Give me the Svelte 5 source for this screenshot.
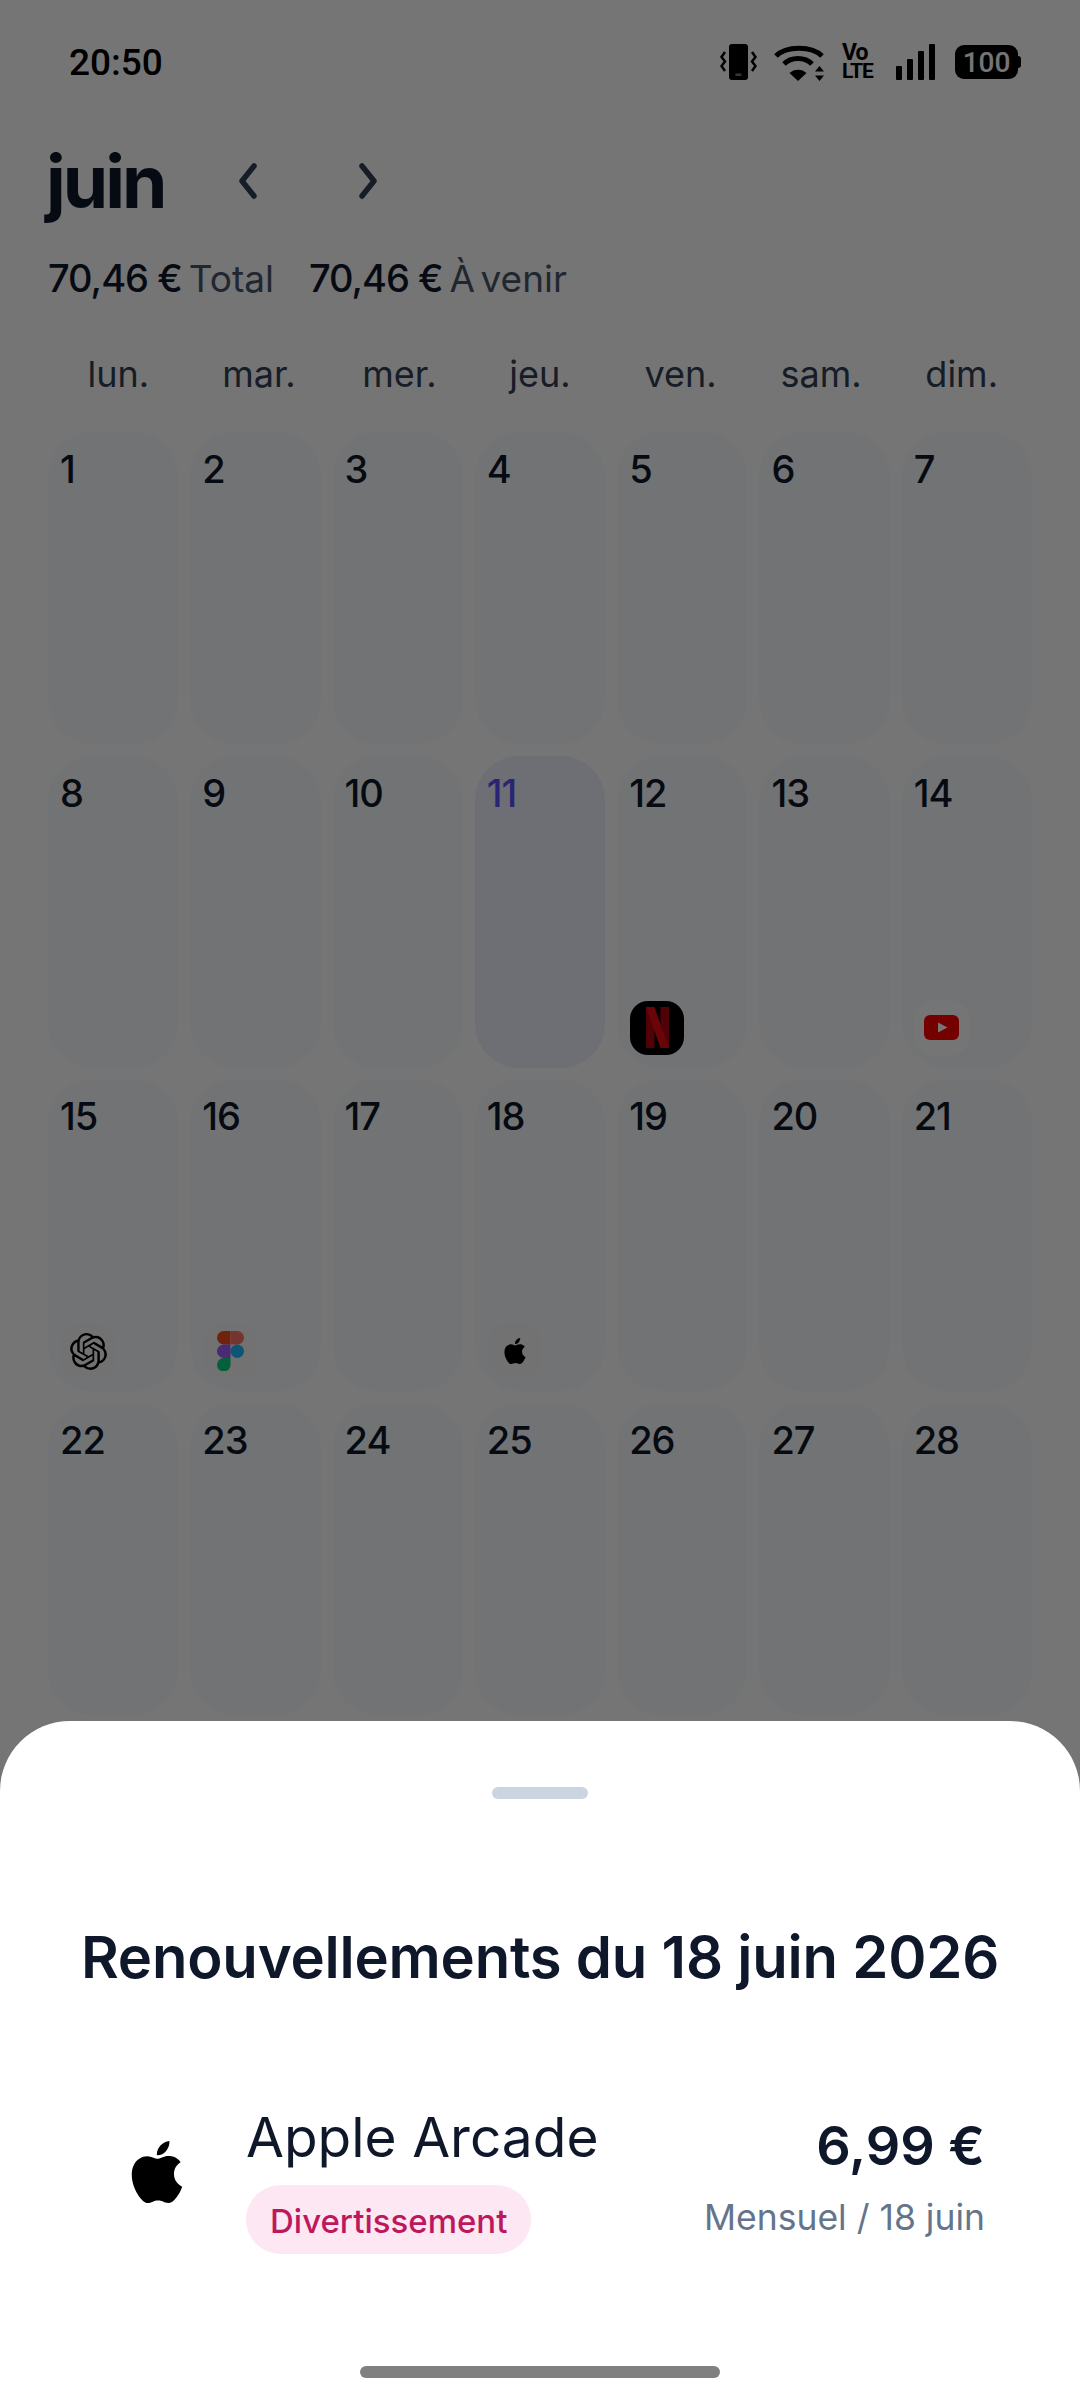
<script lang="ts">
	const weekdays = ['lun.', 'mar.', 'mer.', 'jeu.', 'ven.', 'sam.', 'dim.'];
	const today = 11;
	const icons: Record<number, string> = { 12: 'netflix', 14: 'youtube', 15: 'openai', 16: 'figma', 18: 'apple' };
	const days = Array.from({ length: 30 }, (_, i) => i + 1);
	const applePath =
		'M12.152 6.896c-.948 0-2.415-1.078-3.96-1.04-2.04.027-3.91 1.183-4.961 3.014-2.117 3.675-.546 9.103 1.519 12.09 1.013 1.454 2.208 3.09 3.792 3.039 1.52-.065 2.09-.987 3.935-.987 1.831 0 2.35.987 3.96.948 1.637-.026 2.676-1.48 3.676-2.948 1.156-1.688 1.636-3.325 1.662-3.415-.039-.013-3.182-1.221-3.22-4.857-.026-3.04 2.48-4.494 2.597-4.559-1.429-2.09-3.623-2.324-4.39-2.376-2-.156-3.675 1.09-4.61 1.09zM15.53 3.83c.843-1.012 1.4-2.427 1.245-3.83-1.207.052-2.662.805-3.532 1.818-.78.896-1.454 2.338-1.273 3.714 1.338.104 2.715-.688 3.559-1.701';
	const openaiPath =
		'M22.2819 9.8211a5.9847 5.9847 0 0 0-.5157-4.9108 6.0462 6.0462 0 0 0-6.5098-2.9A6.0651 6.0651 0 0 0 4.9807 4.1818a5.9847 5.9847 0 0 0-3.9977 2.9 6.0462 6.0462 0 0 0 .7427 7.0966 5.98 5.98 0 0 0 .511 4.9107 6.051 6.051 0 0 0 6.5146 2.9001A5.9847 5.9847 0 0 0 13.2599 24a6.0557 6.0557 0 0 0 5.7718-4.2058 5.9894 5.9894 0 0 0 3.9977-2.9001 6.0557 6.0557 0 0 0-.7475-7.0729zm-9.022 12.6081a4.4755 4.4755 0 0 1-2.8764-1.0408l.1419-.0804 4.7783-2.7582a.7948.7948 0 0 0 .3927-.6813v-6.7369l2.02 1.1686a.071.071 0 0 1 .038.052v5.5826a4.504 4.504 0 0 1-4.4945 4.4944zm-9.6607-4.1254a4.4708 4.4708 0 0 1-.5346-3.0137l.142.0852 4.783 2.7582a.7712.7712 0 0 0 .7806 0l5.8428-3.3685v2.3324a.0804.0804 0 0 1-.0332.0615L9.74 19.9502a4.4992 4.4992 0 0 1-6.1408-1.6464zM2.3408 7.8956a4.485 4.485 0 0 1 2.3655-1.9728V11.6a.7664.7664 0 0 0 .3879.6765l5.8144 3.3543-2.0201 1.1685a.0757.0757 0 0 1-.071 0l-4.8303-2.7865A4.504 4.504 0 0 1 2.3408 7.872zm16.5963 3.8558L13.1038 8.364 15.1192 7.2a.0757.0757 0 0 1 .071 0l4.8303 2.7913a4.4944 4.4944 0 0 1-.6765 8.1042v-5.6772a.79.79 0 0 0-.407-.667zm2.0107-3.0231l-.142-.0852-4.7735-2.7818a.7759.7759 0 0 0-.7854 0L9.409 9.2297V6.8974a.0662.0662 0 0 1 .0284-.0615l4.8303-2.7866a4.4992 4.4992 0 0 1 6.6802 4.66zM8.3065 12.863l-2.02-1.1638a.0804.0804 0 0 1-.038-.0567V6.0742a4.4992 4.4992 0 0 1 7.3757-3.4537l-.142.0805L8.704 5.459a.7948.7948 0 0 0-.3927.6813zm1.0976-2.3654l2.602-1.4998 2.6069 1.4998v2.9994l-2.5974 1.4997-2.6067-1.4997Z';
</script>

<div class="screen">
	<div class="page">
		<div class="status">
			<span class="time">20:50</span>
			<div class="status-icons">
				<svg width="37" height="36" viewBox="0 0 37 36" fill="none">
					<rect x="9" y="0" width="19" height="36" rx="3" fill="#000" />
					<rect x="15.5" y="29.500" width="6" height="2.500" fill="#777" />
					<path d="M5 8L1.500 13 5 17.500 1.500 22 5 27M32 8l3.500 5L32 17.500 35.500 22 32 27" stroke="#000" stroke-width="2.500" />
				</svg>
				<svg width="51" height="37" viewBox="0 0 51 37" fill="none">
					<path d="M2 12C12 1.500 38 1.500 48 12M10 20C17 12.500 31 12.500 38 20" stroke="#000" stroke-width="5" />
					<path d="M24 37l-8.500-8c4.500-4.500 12.500-4.500 17 0zM45.500 22l4.500 5.500h-9zM45.500 37l-4.500-5.500h9z" fill="#000" />
				</svg>
				<div class="volte"><span class="vo">Vo</span><span>LTE</span></div>
				<svg width="39" height="36" viewBox="0 0 39 36" fill="#000">
					<rect x="0" y="22" width="6" height="14" rx="1" />
					<rect x="11" y="15" width="6" height="21" rx="1" />
					<rect x="22" y="7" width="6" height="29" rx="1" />
					<rect x="33" y="0" width="6" height="36" rx="1" />
				</svg>
				<div class="battery"><span>100</span></div>
			</div>
		</div>

		<div class="month-row">
			<h1>juin</h1>
			<svg class="chev" width="24" height="36" viewBox="0 0 24 36" fill="none">
				<path d="M18 3L6 18l12 15" />
			</svg>
			<svg class="chev" width="24" height="36" viewBox="0 0 24 36" fill="none">
				<path d="M6 3l12 15L6 33" />
			</svg>
		</div>

		<div class="totals">
			<span class="sum">70,46 €</span><span class="cap">Total</span>
			<span class="sum second">70,46 €</span><span class="cap">À venir</span>
		</div>

		<div class="weekdays">
			{#each weekdays as day}
				<span>{day}</span>
			{/each}
		</div>

		<div class="grid">
			{#each days as day}
				<div class="cell" class:today={day === today}>
					<span class="num">{day}</span>
					{#if icons[day]}
						<div class="tile {icons[day]}">
							{#if icons[day] === 'netflix'}
								<svg width="23" height="41" viewBox="0 0 23 41">
									<path d="M0 0h8.500v41L0 41z" fill="#b1060f" />
									<path d="M14.500 0H23v41h-8.500z" fill="#b1060f" />
									<path d="M0 0h8.500L23 41h-8.500z" fill="#e50914" />
								</svg>
							{:else if icons[day] === 'youtube'}
								<svg width="35" height="25" viewBox="0 0 35 25">
									<rect width="35" height="25" rx="6" fill="#f00" />
									<path d="M14 7.500l9.500 5-9.500 5z" fill="#fff" />
								</svg>
							{:else if icons[day] === 'openai'}
								<svg width="37" height="37" viewBox="0 0 24 24"><path d={openaiPath} fill="#000" /></svg>
							{:else if icons[day] === 'figma'}
								<svg width="27" height="40" viewBox="0 0 27 40">
									<path d="M13.500 0H6.750a6.750 6.750 0 0 0 0 13.500h6.750z" fill="#f24e1e" />
									<path d="M13.500 0h6.750a6.750 6.750 0 0 1 0 13.500H13.500z" fill="#ff7262" />
									<path d="M13.500 13.500H6.750a6.750 6.750 0 0 0 0 13.500h6.750z" fill="#a259ff" />
									<circle cx="20.250" cy="20.250" r="6.750" fill="#1abcfe" />
									<path d="M6.750 27h6.750v6.250a6.750 6.750 0 1 1-6.750-6.250z" fill="#0acf83" />
								</svg>
							{:else}
								<svg width="26" height="26" viewBox="0 0 24 24"><path d={applePath} fill="#000" /></svg>
							{/if}
						</div>
					{/if}
				</div>
			{/each}
		</div>
	</div>

	<div class="scrim"></div>

	<div class="sheet">
		<div class="handle"></div>
		<h2>Renouvellements du 18 juin 2026</h2>
		<div class="row">
			<svg class="logo" width="62" height="62" viewBox="0 0 24 24"><path d={applePath} fill="#000" /></svg>
			<div class="info">
				<span class="name">Apple Arcade</span>
				<span class="pill">Divertissement</span>
			</div>
			<div class="price">
				<span class="amount">6,99 €</span>
				<span class="period">Mensuel / 18 juin</span>
			</div>
		</div>
		<div class="home"></div>
	</div>
</div>

<style>
	:global(body) {
		margin: 0;
		font-family: Inter, 'Liberation Sans', sans-serif;
	}
	.screen {
		position: relative;
		width: 1080px;
		height: 2400px;
		overflow: hidden;
		background: #fff;
	}
	.page {
		display: flex;
		flex-direction: column;
		padding: 0 48px;
		height: 2400px;
		box-sizing: border-box;
	}
	.status {
		display: flex;
		justify-content: space-between;
		align-items: center;
		height: 36px;
		margin: 44px 11px 0 21px;
	}
	.time {
		font-family: Roboto, sans-serif;
		font-size: 37px;
		font-weight: 500;
		color: #000;
	}
	.status-icons {
		display: flex;
		align-items: center;
		gap: 17px;
	}
	.volte {
		display: flex;
		flex-direction: column;
		font-family: Roboto, sans-serif;
		font-weight: 700;
		font-size: 21px;
		line-height: 18px;
		letter-spacing: -1px;
		color: #000;
		width: 32px;
		margin: 0 5px 0 0;
	}
	.vo {
		font-size: 23px;
	}
	.battery {
		position: relative;
		display: flex;
		align-items: center;
		justify-content: center;
		width: 63px;
		height: 34px;
		margin-left: 3px;
		margin-right: 3px;
		border-radius: 9px;
		background: #000;
		color: #fff;
		font-family: Roboto, sans-serif;
		font-size: 28px;
		font-weight: 500;
	}
	.battery::after {
		content: '';
		position: absolute;
		right: -3px;
		top: 11px;
		width: 3px;
		height: 12px;
		border-radius: 0 3px 3px 0;
		background: #000;
	}
	.month-row {
		display: flex;
		align-items: center;
		margin: 64px 0 0 -2px;
		height: 76px;
	}
	h1 {
		margin: 0;
		font-size: 73px;
		font-weight: 700;
		letter-spacing: -3px;
		color: #0f172a;
		line-height: 76px;
	}
	.chev {
		margin-left: 72px;
		margin-top: -2px;
	}
	.chev + .chev {
		margin-left: 96px;
	}
	.chev path {
		stroke: #334155;
		stroke-width: 5.5;
		stroke-linecap: round;
		stroke-linejoin: round;
	}
	.totals {
		display: flex;
		align-items: baseline;
		margin-top: 36px;
		font-size: 37px;
		line-height: 44px;
	}
	.sum {
		font-size: 38px;
		font-weight: 500;
		color: #0f172a;
		letter-spacing: -1px;
		margin-right: 7px;
	}
	.sum.second {
		margin-left: 35px;
	}
	.cap {
		color: #475569;
		word-spacing: -5px;
	}
	.weekdays {
		display: grid;
		grid-template-columns: repeat(7, 1fr);
		margin-top: 51px;
		text-align: center;
		font-size: 36px;
		line-height: 44px;
		color: #334155;
	}
	.grid {
		display: grid;
		grid-template-columns: repeat(7, 1fr);
		grid-auto-rows: 312px;
		gap: 11.5px 12px;
		margin-top: 36px;
	}
	.cell {
		display: flex;
		flex-direction: column;
		justify-content: space-between;
		padding: 13px;
		border-radius: 44px;
		background: #f8fafc;
		box-sizing: border-box;
	}
	.cell.today {
		background: #eef2ff;
	}
	.num {
		margin-left: -1px;
		font-size: 38px;
		font-weight: 500;
		letter-spacing: -1px;
		line-height: 48px;
		color: #0f172a;
	}
	.today .num {
		color: #5a50fa;
	}
	.tile {
		display: flex;
		align-items: center;
		justify-content: center;
		width: 54px;
		height: 54px;
		border-radius: 18px;
		background: #f8f8f8;
	}
	.tile.netflix {
		background: #000;
	}
	.tile.youtube {
		background: #fff;
	}
	.scrim {
		position: absolute;
		inset: 0;
		background: rgba(0, 0, 0, 0.54);
	}
	.sheet {
		position: absolute;
		left: 0;
		right: 0;
		top: 1721px;
		bottom: 0;
		display: flex;
		flex-direction: column;
		align-items: center;
		background: #fff;
		border-radius: 70px 70px 0 0;
	}
	.handle {
		width: 96px;
		height: 12px;
		margin-top: 66px;
		border-radius: 6px;
		background: #cbd5e1;
	}
	h2 {
		margin: 124px 0 0;
		font-size: 58px;
		line-height: 68px;
		font-weight: 600;
		letter-spacing: -0.2px;
		color: #0f172a;
	}
	.row {
		display: flex;
		align-items: center;
		align-self: stretch;
		margin: 114px 95px 0 126px;
	}
	.logo {
		margin-right: 58px;
		margin-bottom: 16px;
	}
	.info {
		display: flex;
		flex-direction: column;
		align-items: flex-start;
		gap: 16px;
		flex: 1;
	}
	.name {
		font-size: 55px;
		line-height: 64px;
		color: #0f172a;
	}
	.pill {
		padding: 0 24px;
		height: 69px;
		line-height: 73px;
		border-radius: 35px;
		background: #fce7f3;
		color: #be185d;
		font-size: 33px;
		font-weight: 500;
	}
	.price {
		display: flex;
		flex-direction: column;
		align-items: flex-end;
		gap: 20px;
		margin-top: -4px;
	}
	.amount {
		font-size: 54px;
		font-weight: 600;
		line-height: 60px;
		color: #0f172a;
	}
	.period {
		font-size: 35.5px;
		line-height: 44px;
		color: #64748b;
	}
	.home {
		width: 360px;
		height: 12px;
		margin-top: auto;
		margin-bottom: 22px;
		border-radius: 6px;
		background: #808080;
	}
</style>
